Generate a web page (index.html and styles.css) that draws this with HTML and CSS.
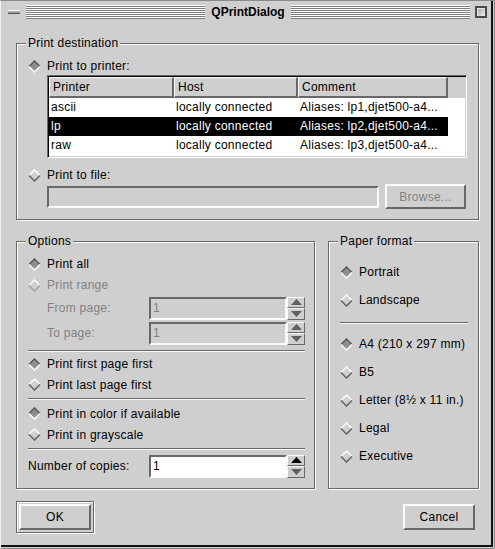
FILE: index.html
```html
<!DOCTYPE html>
<html>
<head>
<meta charset="utf-8">
<title>QPrintDialog</title>
<link rel="stylesheet" href="styles.css">
</head>
<body>
<div class="window">
  <div class="frame">
    <div class="titlebar">
      <span class="menu-btn"></span>
      <span class="stripes"></span>
      <span class="title">QPrintDialog</span>
      <span class="stripes"></span>
      <span class="max-btn"></span>
    </div>
    <div class="content">
      <div class="group dest">
        <span class="group-title">Print destination</span>
        <div class="radio r16">
          <svg class="dia on" width="13" height="13" viewBox="0 0 13 13"><polygon class="f" points="6.5,1 12,6.5 6.5,12 1,6.5"/><polyline class="t" points="1,6.5 6.5,1 12,6.5"/><polyline class="b" points="1,6.5 6.5,12 12,6.5"/></svg>
          <span>Print to printer:</span>
        </div>
        <div class="listview">
          <div class="lv-header">
            <div class="hcell c1">Printer</div>
            <div class="hcell c2">Host</div>
            <div class="hcell c3">Comment</div>
            <div class="hfill"></div>
          </div>
          <div class="lv-row"><span class="c1">ascii</span><span class="c2">locally connected</span><span class="c3">Aliases: lp1,djet500-a4...</span></div>
          <div class="lv-row sel"><span class="c1">lp</span><span class="c2">locally connected</span><span class="c3">Aliases: lp2,djet500-a4...</span></div>
          <div class="lv-row"><span class="c1">raw</span><span class="c2">locally connected</span><span class="c3">Aliases: lp3,djet500-a4...</span></div>
        </div>
        <div class="radio r16 file-radio">
          <svg class="dia" width="13" height="13" viewBox="0 0 13 13"><polygon class="f" points="6.5,1 12,6.5 6.5,12 1,6.5"/><polyline class="t" points="1,6.5 6.5,1 12,6.5"/><polyline class="b" points="1,6.5 6.5,12 12,6.5"/></svg>
          <span>Print to file:</span>
        </div>
        <div class="file-row">
          <div class="lineedit"></div>
          <div class="btn browse disabled">Browse...</div>
        </div>
      </div>

      <div class="bottom-row">
        <div class="group options">
          <span class="group-title">Options</span>
          <div class="radio r21">
            <svg class="dia on" width="13" height="13" viewBox="0 0 13 13"><polygon class="f" points="6.5,1 12,6.5 6.5,12 1,6.5"/><polyline class="t" points="1,6.5 6.5,1 12,6.5"/><polyline class="b" points="1,6.5 6.5,12 12,6.5"/></svg>
            <span>Print all</span>
          </div>
          <div class="radio r21 disabled">
            <svg class="dia dis" width="13" height="13" viewBox="0 0 13 13"><polygon class="f" points="6.5,1 12,6.5 6.5,12 1,6.5"/><polyline class="t" points="1,6.5 6.5,1 12,6.5"/><polyline class="b" points="1,6.5 6.5,12 12,6.5"/></svg>
            <span>Print range</span>
          </div>
          <div class="spinrow from disabled">
            <span class="indent">From page:</span>
            <div class="spin">
              <div class="edit">1</div>
              <div class="arrows">
                <div class="ab up"><svg class="arr" width="11" height="6" viewBox="0 0 11 6"><polygon points="5.5,0 11,6 0,6"/></svg></div>
                <div class="ab down"><svg class="arr" width="11" height="6" viewBox="0 0 11 6"><polygon points="0,0 11,0 5.5,6"/></svg></div>
              </div>
            </div>
          </div>
          <div class="spinrow to disabled">
            <span class="indent">To page:</span>
            <div class="spin">
              <div class="edit">1</div>
              <div class="arrows">
                <div class="ab up"><svg class="arr" width="11" height="6" viewBox="0 0 11 6"><polygon points="5.5,0 11,6 0,6"/></svg></div>
                <div class="ab down"><svg class="arr" width="11" height="6" viewBox="0 0 11 6"><polygon points="0,0 11,0 5.5,6"/></svg></div>
              </div>
            </div>
          </div>
          <div class="sep sep-a"></div>
          <div class="radio r21">
            <svg class="dia on" width="13" height="13" viewBox="0 0 13 13"><polygon class="f" points="6.5,1 12,6.5 6.5,12 1,6.5"/><polyline class="t" points="1,6.5 6.5,1 12,6.5"/><polyline class="b" points="1,6.5 6.5,12 12,6.5"/></svg>
            <span>Print first page first</span>
          </div>
          <div class="radio r21">
            <svg class="dia" width="13" height="13" viewBox="0 0 13 13"><polygon class="f" points="6.5,1 12,6.5 6.5,12 1,6.5"/><polyline class="t" points="1,6.5 6.5,1 12,6.5"/><polyline class="b" points="1,6.5 6.5,12 12,6.5"/></svg>
            <span>Print last page first</span>
          </div>
          <div class="sep sep-b"></div>
          <div class="radio r21">
            <svg class="dia on" width="13" height="13" viewBox="0 0 13 13"><polygon class="f" points="6.5,1 12,6.5 6.5,12 1,6.5"/><polyline class="t" points="1,6.5 6.5,1 12,6.5"/><polyline class="b" points="1,6.5 6.5,12 12,6.5"/></svg>
            <span>Print in color if available</span>
          </div>
          <div class="radio r21">
            <svg class="dia" width="13" height="13" viewBox="0 0 13 13"><polygon class="f" points="6.5,1 12,6.5 6.5,12 1,6.5"/><polyline class="t" points="1,6.5 6.5,1 12,6.5"/><polyline class="b" points="1,6.5 6.5,12 12,6.5"/></svg>
            <span>Print in grayscale</span>
          </div>
          <div class="sep sep-c"></div>
          <div class="spinrow copies">
            <span>Number of copies:</span>
            <div class="spin">
              <div class="edit white">1</div>
              <div class="arrows">
                <div class="ab up active"><svg class="arr" width="11" height="6" viewBox="0 0 11 6"><polygon points="5.5,0 11,6 0,6"/></svg></div>
                <div class="ab down"><svg class="arr" width="11" height="6" viewBox="0 0 11 6"><polygon points="0,0 11,0 5.5,6"/></svg></div>
              </div>
            </div>
          </div>
        </div>

        <div class="group paper">
          <span class="group-title">Paper format</span>
          <div class="radio r28">
            <svg class="dia on" width="13" height="13" viewBox="0 0 13 13"><polygon class="f" points="6.5,1 12,6.5 6.5,12 1,6.5"/><polyline class="t" points="1,6.5 6.5,1 12,6.5"/><polyline class="b" points="1,6.5 6.5,12 12,6.5"/></svg>
            <span>Portrait</span>
          </div>
          <div class="radio r28">
            <svg class="dia" width="13" height="13" viewBox="0 0 13 13"><polygon class="f" points="6.5,1 12,6.5 6.5,12 1,6.5"/><polyline class="t" points="1,6.5 6.5,1 12,6.5"/><polyline class="b" points="1,6.5 6.5,12 12,6.5"/></svg>
            <span>Landscape</span>
          </div>
          <div class="sep sep-p"></div>
          <div class="radio r28">
            <svg class="dia on" width="13" height="13" viewBox="0 0 13 13"><polygon class="f" points="6.5,1 12,6.5 6.5,12 1,6.5"/><polyline class="t" points="1,6.5 6.5,1 12,6.5"/><polyline class="b" points="1,6.5 6.5,12 12,6.5"/></svg>
            <span>A4 (210 x 297 mm)</span>
          </div>
          <div class="radio r28">
            <svg class="dia" width="13" height="13" viewBox="0 0 13 13"><polygon class="f" points="6.5,1 12,6.5 6.5,12 1,6.5"/><polyline class="t" points="1,6.5 6.5,1 12,6.5"/><polyline class="b" points="1,6.5 6.5,12 12,6.5"/></svg>
            <span>B5</span>
          </div>
          <div class="radio r28">
            <svg class="dia" width="13" height="13" viewBox="0 0 13 13"><polygon class="f" points="6.5,1 12,6.5 6.5,12 1,6.5"/><polyline class="t" points="1,6.5 6.5,1 12,6.5"/><polyline class="b" points="1,6.5 6.5,12 12,6.5"/></svg>
            <span>Letter (8½ x 11 in.)</span>
          </div>
          <div class="radio r28">
            <svg class="dia" width="13" height="13" viewBox="0 0 13 13"><polygon class="f" points="6.5,1 12,6.5 6.5,12 1,6.5"/><polyline class="t" points="1,6.5 6.5,1 12,6.5"/><polyline class="b" points="1,6.5 6.5,12 12,6.5"/></svg>
            <span>Legal</span>
          </div>
          <div class="radio r28">
            <svg class="dia" width="13" height="13" viewBox="0 0 13 13"><polygon class="f" points="6.5,1 12,6.5 6.5,12 1,6.5"/><polyline class="t" points="1,6.5 6.5,1 12,6.5"/><polyline class="b" points="1,6.5 6.5,12 12,6.5"/></svg>
            <span>Executive</span>
          </div>
        </div>
      </div>

      <div class="button-row">
        <div class="default-frame"><div class="btn ok">OK</div></div>
        <div class="btn cancel">Cancel</div>
      </div>
    </div>
  </div>
</div>
</body>
</html>
```
FILE: styles.css
```css
* { box-sizing: border-box; }
html, body { margin: 0; padding: 0; }
body {
  width: 495px;
  height: 549px;
  overflow: hidden;
  background: #cfcfcf;
  font-family: "Liberation Sans", Arial, sans-serif;
  font-size: 12px;
  letter-spacing: 0.25px;
  color: #000;
}
.window {
  width: 495px;
  height: 549px;
  background: #cfcfcf;
  border-top: 1px solid #8a8a8a;
  border-left: 1px solid #f4f4f4;
  border-right: 1px solid #8a8a8a;
  border-bottom: 1px solid #8a8a8a;
  display: flex;
}
.frame {
  flex: 1;
  margin: 0 1px 1px 0;
  border-right: 2px solid #111;
  border-bottom: 2px solid #111;
  display: flex;
  flex-direction: column;
}
.titlebar {
  height: 22px;
  display: flex;
  align-items: center;
  padding: 0 4px 0 7px;
}
.menu-btn {
  width: 12px;
  height: 4px;
  background: #a8a8a8;
  border-top: 1px solid #fff;
  border-bottom: 1px solid #505050;
  margin-right: 6px;
}
.stripes {
  flex: 1;
  height: 14px;
  background: repeating-linear-gradient(to bottom, #fff 0, #fff 1px, #7c7c7c 1px, #7c7c7c 2px);
}
.title {
  font-weight: bold;
  letter-spacing: 0;
  padding: 0 6px 0 6px;
  line-height: 22px;
}
.max-btn {
  width: 12px;
  height: 12px;
  margin-left: 5px;
  border: 2px solid #4a4a4a;
  background: linear-gradient(135deg, #a0a0a0, #f2f2f2);
  box-shadow: inset 1px 1px 0 #e8e8e8;
}
.content {
  padding: 20px 12px 0 15px;
  display: flex;
  flex-direction: column;
}
.group {
  position: relative;
  border: 1px solid #686868;
  box-shadow: 1px 1px 0 #fff, inset 1px 1px 0 #fff;
}
.group-title {
  position: absolute;
  top: -8px;
  left: 9px;
  padding: 0 2px;
  line-height: 14px;
  background: #cfcfcf;
  white-space: nowrap;
}
.dest {
  padding: 14px 10px 10px 11px;
  display: flex;
  flex-direction: column;
}
.radio {
  display: flex;
  align-items: center;
  gap: 6px;
  white-space: nowrap;
}
.radio.r16 { height: 16px; }
.radio.r21 { height: 21px; }
.radio.r28 { height: 28px; }
.radio.disabled, .spinrow.disabled > span { color: #828282; }
.dia { flex: none; display: block; }
.dia .f { fill: #cfcfcf; }
.dia .t, .dia .b { fill: none; stroke-width: 1.6; }
.dia .t { stroke: #fafafa; }
.dia .b { stroke: #686868; }
.dia.on .f { fill: #8e8e8e; }
.dia.on .t { stroke: #5e5e5e; }
.dia.on .b { stroke: #fafafa; }
.dia.dis .b { stroke: #a4a4a4; }

.listview {
  margin: 1px 0 0 19px;
  width: 420px;
  height: 83px;
  padding: 1px;
  background: #fff;
  border: 1px solid;
  border-color: #686868 #fff #fff #686868;
  box-shadow: inset 1px 1px 0 #000, inset -1px -1px 0 #cfcfcf;
}
.lv-header {
  display: flex;
  height: 21px;
  background: #cfcfcf;
}
.hcell {
  border-top: 1px solid #fff;
  border-left: 1px solid #fff;
  border-right: 2px solid #686868;
  border-bottom: 2px solid #686868;
  padding-left: 3px;
  line-height: 18px;
  white-space: nowrap;
}
.c1 { width: 125px; flex: none; }
.c2 { width: 124px; flex: none; }
.c3 { width: 150px; flex: none; }
.hfill { flex: 1; }
.lv-row {
  display: flex;
  width: 399px;
  height: 19px;
  line-height: 19px;
}
.lv-row span {
  padding-left: 2px;
  white-space: nowrap;
  overflow: hidden;
}
.lv-row.sel {
  background: #000;
  color: #fff;
}
.file-radio { margin-top: 9px; }
.file-row {
  display: flex;
  align-items: center;
  gap: 6px;
  height: 25px;
  margin: 1px 0 0 19px;
}
.lineedit {
  width: 332px;
  height: 22px;
  border: 2px solid;
  border-color: #686868 #fafafa #fafafa #686868;
}
.btn {
  display: flex;
  align-items: center;
  justify-content: center;
  border: 2px solid;
  border-color: #fafafa #686868 #686868 #fafafa;
  white-space: nowrap;
}
.btn.disabled { color: #828282; }
.browse { width: 81px; height: 25px; }

.bottom-row {
  display: flex;
  gap: 13px;
  margin-top: 21px;
  height: 248px;
}
.options {
  width: 299px;
  padding: 12px 9px 10px 11px;
  display: flex;
  flex-direction: column;
}
.paper {
  width: 151px;
  padding: 16px 10px 0 11px;
  display: flex;
  flex-direction: column;
}
.spinrow {
  display: flex;
  align-items: center;
  justify-content: space-between;
  height: 23px;
  white-space: nowrap;
}
.spinrow.from { margin-top: 1px; }
.spinrow.to { margin-top: 2px; }
.indent { padding-left: 19px; }
.spin {
  display: flex;
  width: 156px;
  height: 23px;
}
.edit {
  width: 138px;
  height: 23px;
  border: 2px solid;
  border-color: #686868 #fafafa #fafafa #686868;
  padding-left: 2px;
  line-height: 19px;
  color: #828282;
}
.edit.white { background: #fff; color: #000; }
.arrows {
  width: 18px;
  display: flex;
  flex-direction: column;
}
.ab {
  display: flex;
  align-items: center;
  justify-content: center;
  border-top: 1px solid #fafafa;
  border-left: 1px solid #fafafa;
  border-right: 1px solid #686868;
  border-bottom: 1px solid #686868;
}
.ab.up { height: 11px; }
.ab.down { height: 12px; }
.arr { display: block; fill: #606060; }
.ab.active .arr { fill: #000; }

.sep {
  height: 2px;
  border-top: 1px solid #686868;
  border-bottom: 1px solid #fafafa;
  flex: none;
}
.sep-a { margin: 5px 0 2px; }
.sep-b { margin: 3px 0 3px; }
.sep-c { margin: 3px 0 5px; }
.sep-p { margin: 8px 0 6px; }

.button-row {
  display: flex;
  justify-content: space-between;
  align-items: center;
  height: 32px;
  margin-top: 12px;
  padding-right: 4px;
}
.default-frame {
  width: 78px;
  height: 32px;
  padding: 2px;
  border: 1px solid #686868;
  box-shadow: 1px 1px 0 #fff, inset 1px 1px 0 #fff;
}
.ok { width: 100%; height: 100%; }
.cancel { width: 72px; height: 26px; }
```
